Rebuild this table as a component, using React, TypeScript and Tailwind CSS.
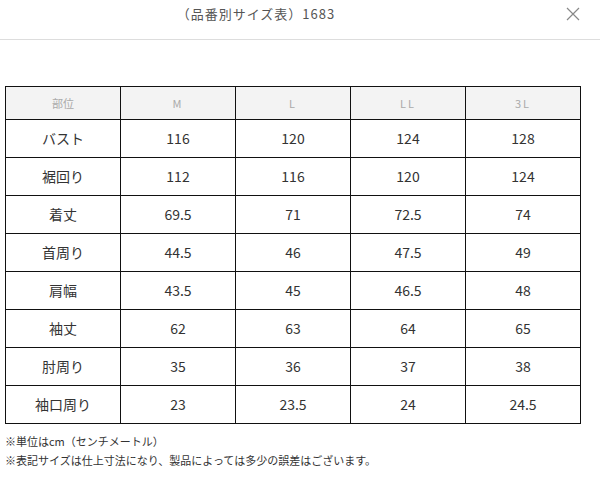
import React from 'react';

const sizes = ['M', 'L', 'LL', '3L'];

const rows: [string, string[]][] = [
  ['バスト', ['116', '120', '124', '128']],
  ['裾回り', ['112', '116', '120', '124']],
  ['着丈', ['69.5', '71', '72.5', '74']],
  ['首周り', ['44.5', '46', '47.5', '49']],
  ['肩幅', ['43.5', '45', '46.5', '48']],
  ['袖丈', ['62', '63', '64', '65']],
  ['肘周り', ['35', '36', '37', '38']],
  ['袖口周り', ['23', '23.5', '24', '24.5']],
];

const font = { fontFamily: '"Noto Sans CJK JP", "Noto Sans", sans-serif' };

const App: React.FC = () => {
  return (
    <div className="w-[600px] h-[486px] bg-white text-[#333]" style={font}>
      <div className="relative h-[40px] border-b border-[#ddd] flex items-start justify-center">
        <span className="mt-[4px] ml-[-88px] text-[13px] tracking-[1px] text-[#555]">（品番別サイズ表）1683</span>
        <button className="absolute right-[20px] top-[7px] text-[#888]">
          <svg width="14" height="14" viewBox="0 0 14 14" stroke="currentColor" strokeWidth="1.2" fill="none">
            <path d="M1 1 L13 13 M13 1 L1 13" />
          </svg>
        </button>
      </div>

      <div className="pt-[46px] px-[5px]">
        <table className="w-[576px] border-collapse table-fixed">
          <thead>
            <tr className="h-[33px] bg-[#f3f3f3]">
              <th className="border border-[#111] font-normal text-[11px] text-[#aaa]">部位</th>
              {sizes.map((s) => (
                <th key={s} className="border border-[#111] font-normal text-[11px] text-[#aaa] tracking-[2px]">
                  {s}
                </th>
              ))}
            </tr>
          </thead>
          <tbody>
            {rows.map(([label, vals]) => (
              <tr key={label} className="h-[38px]">
                <td className="border border-[#111] text-center text-[14px]">{label}</td>
                {vals.map((v, i) => (
                  <td key={i} className="border border-[#111] text-center text-[14px]">
                    {v}
                  </td>
                ))}
              </tr>
            ))}
          </tbody>
        </table>
        <div className="mt-[8px] text-[11px] leading-[19px] text-[#333]">
          <p>※単位はcm（センチメートル）</p>
          <p>※表記サイズは仕上寸法になり、製品によっては多少の誤差はございます。</p>
        </div>
      </div>
    </div>
  );
};

export default App;
